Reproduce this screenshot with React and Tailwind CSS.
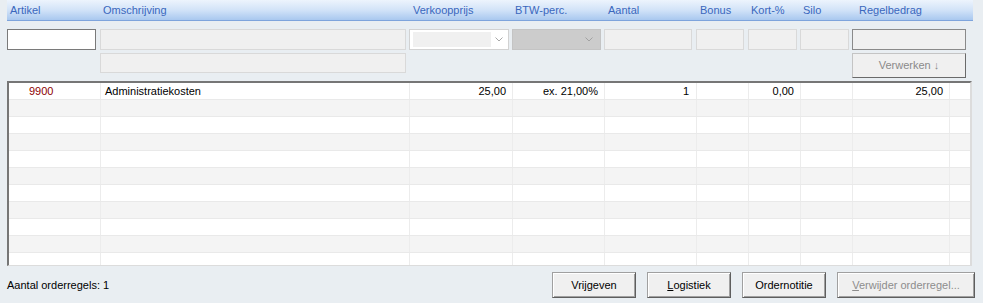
import React from "react";

const COLS = [92, 309, 103, 92, 92, 52, 52, 52, 97, 21];

function Chevron({ color }) {
  return (
    <svg width="8" height="5" viewBox="0 0 8 5" className="block">
      <path d="M0.5 0.5 L4 4 L7.5 0.5" fill="none" stroke={color} strokeWidth="1" />
    </svg>
  );
}

function Btn({ children, w, disabled, className = "" }) {
  return (
    <div
      className={`flex items-center justify-center h-[26px] bg-[#f0f0f0] border border-[#a0a0a0] border-r-[#5e5e5e] border-b-[#5e5e5e] shadow-[inset_1px_1px_0_#ffffff,inset_-1px_-1px_0_#a0a0a0] ${
        disabled ? "text-[#8d8d8d]" : "text-black"
      } ${className}`}
      style={{ width: w }}
    >
      {children}
    </div>
  );
}

export default function App() {
  const rows = Array.from({ length: 11 });
  const data = [
    { t: "9900", cls: "pl-[20px] text-[#8c0000]" },
    { t: "Administratiekosten", cls: "pl-[4px]" },
    { t: "25,00", cls: "justify-end pr-[6px]" },
    { t: "ex. 21,00%", cls: "justify-end pr-[6px]" },
    { t: "1", cls: "justify-end pr-[7px]" },
    { t: "", cls: "" },
    { t: "0,00", cls: "justify-end pr-[6px]" },
    { t: "", cls: "" },
    { t: "25,00", cls: "justify-end pr-[6px]" },
    { t: "", cls: "" },
  ];
  const headers = [
    ["Artikel", "pl-[3px]"],
    ["Omschrijving", "pl-[2px]"],
    ["Verkoopprijs", "pl-[3px]"],
    ["BTW-perc.", "pl-[2px]"],
    ["Aantal", "pl-[3px]"],
    ["Bonus", "pl-[3px]"],
    ["Kort-%", "pl-[2px]"],
    ["Silo", "pl-[2px]"],
    ["Regelbedrag", "pl-[6px]"],
    ["", ""],
  ];

  return (
    <div
      className="w-[983px] h-[303px] bg-[#e9eef2] overflow-hidden text-[11px] leading-none text-black"
      style={{ fontFamily: '"Liberation Sans", Arial, sans-serif' }}
    >
      <div className="pl-[7px]">
        {/* Header */}
        <div className="flex w-[966px] h-[21px] bg-gradient-to-b from-[#edf4fd] via-[#d2e3f8] to-[#a9c8ef] border-b border-[#7ea4dc] text-[#3a67bd]">
          {headers.map(([h, c], i) => (
            <div
              key={i}
              className={`flex items-center shrink-0 ${c}`}
              style={{ width: i === 0 ? COLS[0] + 2 : COLS[i] }}
            >
              {h}
            </div>
          ))}
        </div>

        {/* Input row 1 */}
        <div className="flex mt-[8px] h-[21px]">
          <div className="w-[89px] h-full bg-white border border-[#7a7a7a]" />
          <div className="ml-[4px] w-[306px] h-full bg-[#f0f0f0] border border-[#d9d9d9]" />
          <div className="ml-[3px] w-[100px] h-full bg-white border border-[#d2d2d2] flex items-center pl-[3px] pr-[5px]">
            <div className="w-[78px] h-[15px] bg-[#f0f0f0]" />
            <div className="ml-auto">
              <Chevron color="#a8a8a8" />
            </div>
          </div>
          <div className="ml-[3px] w-[89px] h-full bg-[#cccccc] border border-[#c4c4c4] flex items-center justify-end pr-[7px]">
            <Chevron color="#a2a2a2" />
          </div>
          <div className="ml-[3px] w-[88px] h-full bg-[#f0f0f0] border border-[#d9d9d9]" />
          <div className="ml-[4px] w-[48px] h-full bg-[#f0f0f0] border border-[#d9d9d9]" />
          <div className="ml-[4px] w-[49px] h-full bg-[#f0f0f0] border border-[#d9d9d9]" />
          <div className="ml-[3px] w-[49px] h-full bg-[#f0f0f0] border border-[#d9d9d9]" />
          <div className="ml-[3px] w-[114px] h-full bg-[#f0f0f0] border border-[#8a8a8a]" />
        </div>

        {/* Input row 2 */}
        <div className="flex mt-[3px] h-[25px]">
          <div className="ml-[93px] w-[306px] h-[20px] bg-[#f0f0f0] border border-[#d9d9d9]" />
          <div className="ml-[446px] w-[114px] h-[25px] flex items-center justify-center bg-[#f0f0f0] border border-[#c4c4c4] border-r-[#6a6a6a] border-b-[#6a6a6a] text-[#8a8a8a] gap-[3px]">
            <span>Verwerken</span>
            <span className="text-[11px]">↓</span>
          </div>
        </div>

        {/* Grid */}
        <div className="mt-[3px] w-[965px] h-[185px] overflow-hidden bg-white border-t-2 border-l-2 border-t-[#767676] border-l-[#767676] border-r-2 border-b border-r-[#dcdcdc] border-b-[#dcdcdc]">
          {rows.map((_, r) => (
            <div
              key={r}
              className={`flex h-[17px] border-b border-[#e9e9e9] ${r % 2 === 1 ? "bg-[#f4f4f4]" : "bg-white"}`}
            >
              {COLS.map((w, c) => (
                <div
                  key={c}
                  className={`flex items-center shrink-0 h-full ${c < COLS.length - 1 ? "border-r border-[#ececec]" : ""} ${
                    r === 0 ? data[c].cls : ""
                  }`}
                  style={{ width: w }}
                >
                  {r === 0 ? data[c].t : ""}
                </div>
              ))}
            </div>
          ))}
        </div>

        {/* Footer */}
        <div className="flex items-center mt-[6px] h-[26px]">
          <div className="w-[545px]">Aantal orderregels: 1</div>
          <Btn w={84}>Vrijgeven</Btn>
          <Btn w={84} className="ml-[11px]">
            <span>
              <span className="underline">L</span>ogistiek
            </span>
          </Btn>
          <Btn w={84} className="ml-[11px]">Ordernotitie</Btn>
          <Btn w={138} className="ml-[11px]" disabled>
            <span>
              <span className="underline">V</span>erwijder orderregel...
            </span>
          </Btn>
        </div>
      </div>
    </div>
  );
}
